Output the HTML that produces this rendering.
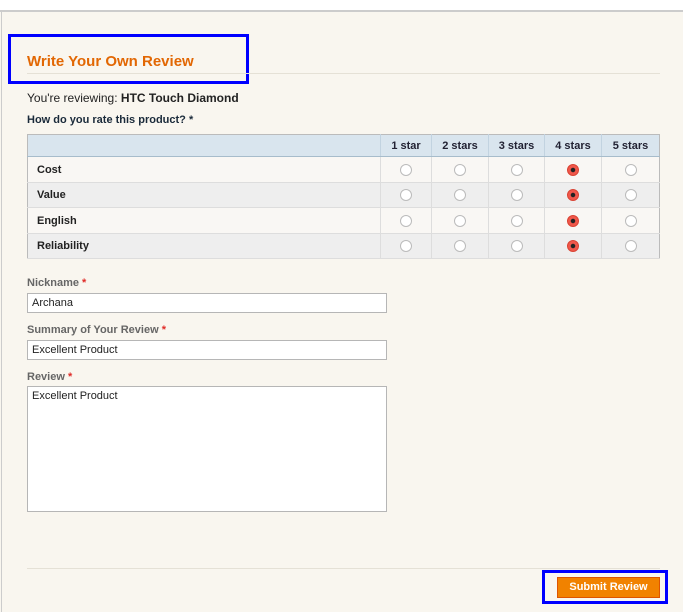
<!DOCTYPE html>
<html><head><style>
*{margin:0;padding:0;box-sizing:border-box}
body{width:683px;height:611px;background:#f9f6ef;font-family:"Liberation Sans",Arial,sans-serif;position:relative;overflow:hidden;font-size:12px;color:#222}
.top{position:absolute;left:0;top:0;width:683px;height:12px;background:#fff;border-bottom:2px solid #ccc}
.lb{position:absolute;left:1px;top:12px;width:1px;height:600px;background:#ccc}
.a{position:absolute}
h2{position:absolute;left:27px;top:53px;font-size:15px;color:#e26703;font-weight:bold}
.hl{position:absolute;left:27px;top:73px;width:633px;height:1px;background:#e5e1d6}
.box{position:absolute;border:3px solid #0000ff}
table{position:absolute;left:27px;top:134px;width:633px;border-collapse:collapse;border:1px solid #bbb}
th{background:#d9e5ee;height:22px;font-size:11px;color:#223;border-left:1px solid #c2d3e0;border-bottom:1px solid #a7bccb;text-align:center}
td{height:26px;border-bottom:1px solid #ddd;border-left:1px solid #ddd;text-align:center;font-size:11px;font-weight:bold}
tr.s td{height:25px}
td:first-child{text-align:left;padding-left:9px;border-left:none}
tr:nth-child(odd) td{background:#eee}
tr:nth-child(even) td{background:#f9f7f4}
.r{display:inline-block;width:12px;height:12px;border-radius:50%;border:1px solid #bbb;background:#fff;vertical-align:middle}
.r.on{background:radial-gradient(circle,#222 0 2px,#f0574a 2.5px);border-color:#d94434}
label{position:absolute;left:27px;font-size:11px;font-weight:bold;color:#666}
label b{color:#e02b27}
.in{position:absolute;left:27px;width:360px;height:20px;border:1px solid #b6b6b6;background:#fff;font-size:11px;padding:3px 4px;color:#222}
</style></head><body>
<div class="top"></div><div class="lb"></div>
<div class="box" style="left:8px;top:34px;width:241px;height:50px"></div>
<h2>Write Your Own Review</h2>
<div class="hl"></div>
<div class="a" style="left:27px;top:91px;font-size:12px">You're reviewing: <b>HTC Touch Diamond</b></div>
<div class="a" style="left:27px;top:114px;font-size:11px;font-weight:bold;color:#1a2a3a">How do you rate this product? *</div>
<table>
<tr><th style="width:353px;border-left:none"></th><th style="width:51px">1 star</th><th style="width:57px">2 stars</th><th style="width:56px">3 stars</th><th style="width:57px">4 stars</th><th>5 stars</th></tr>
<tr><td>Cost</td><td><span class="r"></span></td><td><span class="r"></span></td><td><span class="r"></span></td><td><span class="r on"></span></td><td><span class="r"></span></td></tr>
<tr class="s"><td>Value</td><td><span class="r"></span></td><td><span class="r"></span></td><td><span class="r"></span></td><td><span class="r on"></span></td><td><span class="r"></span></td></tr>
<tr><td>English</td><td><span class="r"></span></td><td><span class="r"></span></td><td><span class="r"></span></td><td><span class="r on"></span></td><td><span class="r"></span></td></tr>
<tr class="s"><td>Reliability</td><td><span class="r"></span></td><td><span class="r"></span></td><td><span class="r"></span></td><td><span class="r on"></span></td><td><span class="r"></span></td></tr>
</table>
<label style="top:277px">Nickname <b>*</b></label>
<div class="in" style="top:293px">Archana</div>
<label style="top:324px">Summary of Your Review <b>*</b></label>
<div class="in" style="top:340px">Excellent Product</div>
<label style="top:371px">Review <b>*</b></label>
<div class="in" style="top:386px;height:126px">Excellent Product</div>
<div class="a" style="left:27px;top:568px;width:633px;height:1px;background:#e5e1d6"></div>
<div class="box" style="left:542px;top:570px;width:126px;height:34px"></div>
<div class="a" style="left:557px;top:577px;width:103px;height:21px;background:#f18200;border:1px solid #de5400;color:#fff;font-weight:bold;font-size:11px;text-align:center;line-height:19px">Submit Review</div>
</body></html>
